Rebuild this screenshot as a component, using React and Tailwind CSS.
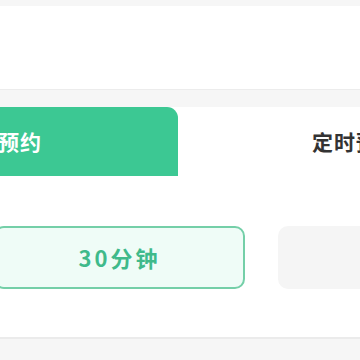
export default function App() {
  const font = { fontFamily: '"Noto Sans CJK SC", "Noto Sans", sans-serif' };
  return (
    <div className="w-[360px] h-[360px] overflow-hidden bg-[#f6f6f6] flex flex-col" style={font}>
      <div className="h-[6px] shrink-0" />
      <div className="h-[84px] shrink-0 bg-white border-b border-[#ececec]" />
      <div className="h-[17px] shrink-0" />

      <div className="shrink-0 bg-white border-b-2 border-[#ebebeb] w-[720px] -ml-[182px]">
        {/* Tabs */}
        <div className="grid grid-cols-2 h-[69px]">
          <div className="bg-[#3cc893] rounded-tr-[11px] flex items-center justify-center text-white text-[21px] font-bold tracking-[1px]">
            立即预约
          </div>
          <div className="flex items-center justify-center text-[#333] text-[21px] font-bold tracking-[1px] pr-[4px]">
            定时预约
          </div>
        </div>

        {/* Durations */}
        <div className="flex gap-[33px] pl-[176px] pt-[50px] pb-[48px]">
          <button className="w-[251px] h-[63px] shrink-0 rounded-[10px] border-2 border-[#74cfa8] bg-[#effcf7] text-[#3fba8b] text-[22px] font-bold tracking-[3px]">
            30分钟
          </button>
          <button className="w-[251px] h-[63px] shrink-0 rounded-[10px] bg-[#f5f5f5] text-[#666] text-[22px] font-bold tracking-[3px]">
            60分钟
          </button>
        </div>
      </div>
    </div>
  );
}
